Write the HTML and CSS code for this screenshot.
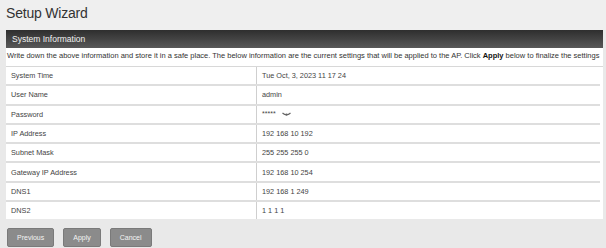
FILE: index.html
```html
<!DOCTYPE html>
<html lang="en">
<head>
    <meta charset="UTF-8">
    <meta name="viewport" content="width=device-width, initial-scale=1.0">
    <title>Setup Wizard</title>
    <link rel="stylesheet" href="styles.css">
</head>
<body>

    <h1 class="page-title">Setup Wizard</h1>

    <div class="panel">
        <div class="panel-header">System Information</div>
        <p class="notice">Write down the above information and store it in a safe place. The below information are the current settings that will be applied to the AP. Click <b>Apply</b> below to finalize the settings</p>

        <table class="info-table">
            <tr><td>System Time</td><td>Tue Oct, 3, 2023 11 17 24</td></tr>
            <tr><td>User Name</td><td>admin</td></tr>
            <tr>
                <td>Password</td>
                <td>
                    <span class="secret">*****</span>
                    <svg class="eye" width="9" height="5" viewBox="0 0 9 5">
                        <path d="M0.5 1 Q4.5 4.5 8.5 1" fill="none" stroke="#666" stroke-width="1.2"/>
                        <circle cx="4.5" cy="2.6" r="1.2" fill="#666"/>
                    </svg>
                </td>
            </tr>
            <tr><td>IP Address</td><td>192 168 10 192</td></tr>
            <tr><td>Subnet Mask</td><td>255 255 255 0</td></tr>
            <tr><td>Gateway IP Address</td><td>192 168 10 254</td></tr>
            <tr><td>DNS1</td><td>192 168 1 249</td></tr>
            <tr><td>DNS2</td><td>1 1 1 1</td></tr>
        </table>
    </div>

    <div class="actions">
        <button class="btn">Previous</button>
        <button class="btn">Apply</button>
        <button class="btn">Cancel</button>
    </div>

</body>
</html>
```
FILE: styles.css
```css
body {
    font-family: "Liberation Sans", Arial, sans-serif;
    margin: 0;
    background-color: #e9e9e9;
    color: #333;
    width: 606px;
    height: 248px;
    overflow: hidden;
}
.page-title {
    font-size: 14px;
    font-weight: normal;
    color: #333;
    margin: 0;
    padding: 5px 6px 0;
    height: 25px;
    letter-spacing: -0.2px;
    background-color: #efefef;
}
.panel {
    margin: 0 3px 0 6px;
    background-color: #fff;
}
.panel-header {
    height: 18px;
    line-height: 18px;
    padding-left: 6px;
    font-size: 8.5px;
    color: #f2f2f2;
    background: linear-gradient(#2e2e2e, #585858);
}
.notice {
    margin: 0;
    padding: 3px 0 0 1px;
    height: 15px;
    font-size: 7.5px;
    line-height: 10px;
    color: #333;
    white-space: nowrap;
    border-bottom: 1px solid #d8d8d8;
}
.notice b {
    color: #111;
}
.info-table {
    width: 594px;
    border-collapse: collapse;
    font-size: 7.3px;
    color: #444;
}
.info-table td {
    height: 17.3px;
    padding: 0 5px;
    border-bottom: 2px solid #dedede;
}
.info-table td:first-child {
    width: 240px;
    border-right: 1px solid #cfcfcf;
}
.info-table tr:last-child td {
    border-bottom: none;
}
.secret {
    font-size: 7px;
    vertical-align: 1px;
}
.eye {
    margin-left: 4px;
}
.actions {
    display: flex;
    gap: 9px;
    padding: 9px 0 0 7px;
}
.btn {
    font-family: "Liberation Sans", Arial, sans-serif;
    font-size: 7px;
    color: #f4f4f4;
    background-color: #8b8b8b;
    border: 1px solid #7a7a7a;
    border-radius: 2px;
    height: 19px;
    padding: 0 9px;
}
```
